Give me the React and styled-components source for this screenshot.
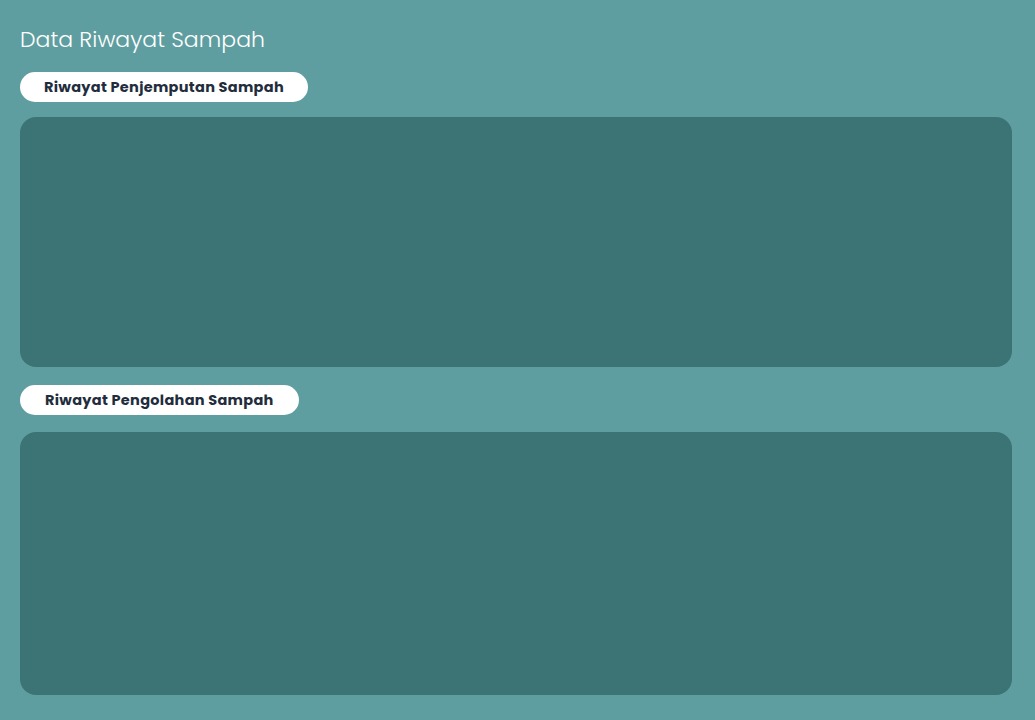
import React from "react";
import styled, { createGlobalStyle } from "styled-components";

const GlobalStyle = createGlobalStyle`
  html, body {
    margin: 0;
    padding: 0;
    background: #5f9ea0;
  }
  body {
    font-family: "Poppins", "Open Sans", "Noto Sans", sans-serif;
  }
`;

const Page = styled.div`
  display: flex;
  flex-direction: column;
  min-height: 720px;
  box-sizing: border-box;
  padding: 24px 23px 25px 20px;
  background: #5f9ea0;
`;

const Title = styled.h1`
  margin: 0 0 16px;
  font-size: 22px;
  font-weight: 300;
  line-height: 32px;
  color: #ffffff;
  letter-spacing: 0.05px;
`;

const Pill = styled.div`
  align-self: flex-start;
  display: flex;
  align-items: center;
  justify-content: center;
  height: 30px;
  box-sizing: border-box;
  padding: 0 ${(p) => p.$pad}px;
  border-radius: 15px;
  background: #ffffff;
  color: #1f2d3d;
  font-size: 14.5px;
  font-weight: 700;
  letter-spacing: 0.3px;
  margin-bottom: ${(p) => p.$mb}px;
`;

const Panel = styled.div`
  height: ${(p) => p.$h}px;
  border-radius: 16px;
  background: #3c7476;
  margin-bottom: ${(p) => p.$mb || 0}px;
`;

const App = () => {
  return (
    <>
      <GlobalStyle />
      <Page>
        <Title>Data Riwayat Sampah</Title>
        <Pill $pad={24} $mb={15}>Riwayat Penjemputan Sampah</Pill>
        <Panel $h={250} $mb={18} />
        <Pill $pad={25} $mb={17}>Riwayat Pengolahan Sampah</Pill>
        <Panel $h={263} />
      </Page>
    </>
  );
};

export default App;
